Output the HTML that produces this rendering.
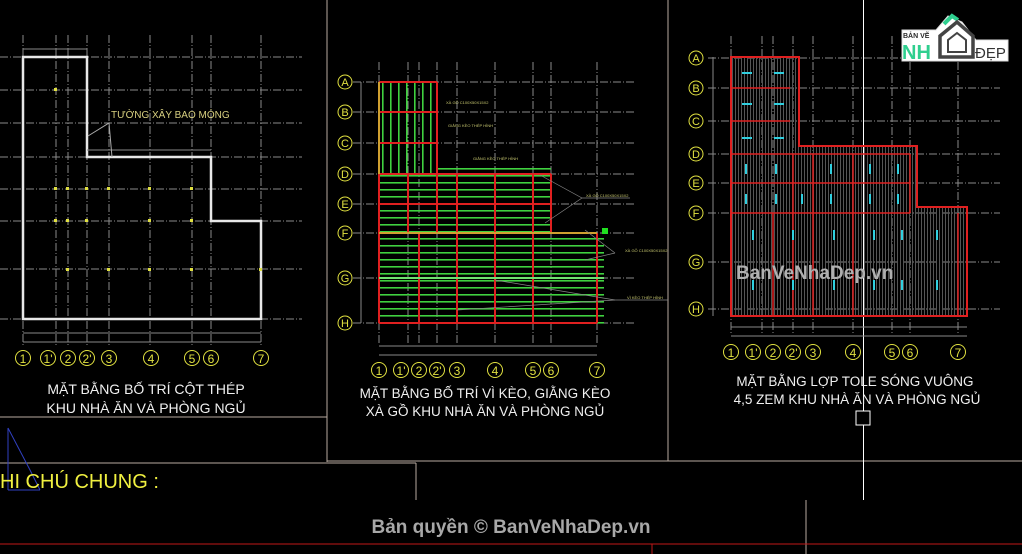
<!DOCTYPE html>
<html><head><meta charset="utf-8"><style>
html,body{margin:0;padding:0;background:#000;width:1022px;height:554px;overflow:hidden}
svg{display:block}
text{font-family:"Liberation Sans",sans-serif}
</style></head><body>
<svg width="1022" height="554" viewBox="0 0 1022 554" xmlns="http://www.w3.org/2000/svg">
<defs>
<pattern id="hg" width="10" height="7" patternUnits="userSpaceOnUse" y="168"><rect y="0" width="10" height="1.6" fill="#3fd23f"/></pattern>
<pattern id="vg" width="8" height="10" patternUnits="userSpaceOnUse" x="382"><rect width="1.6" height="10" fill="#3fd23f"/></pattern>
<pattern id="vh" width="3" height="10" patternUnits="userSpaceOnUse"><rect width="1" height="10" fill="#555"/></pattern>
</defs>
<rect width="1022" height="554" fill="#000"/>

<g stroke="#b8aaa0" stroke-width="1" fill="none">
<line x1="0" y1="417" x2="327" y2="417"/>
<line x1="327" y1="0" x2="327" y2="462"/>
<line x1="668" y1="0" x2="668" y2="461"/>
<line x1="327" y1="461" x2="1022" y2="461"/>
<line x1="0" y1="463" x2="416" y2="463"/>
<line x1="416" y1="463" x2="416" y2="500"/>
<line x1="806" y1="500" x2="806" y2="554"/>
</g>
<line x1="0" y1="544" x2="1022" y2="544" stroke="#c01818"/>
<line x1="652" y1="544" x2="652" y2="554" stroke="#c01818"/>
<line x1="863.5" y1="0" x2="863.5" y2="500" stroke="#fff"/>
<rect x="856" y="411" width="14" height="14" fill="#000" stroke="#fff"/>
<path d="M8 428 L8 490 M8 428 L30 470 L40 490 M8 490 L40 490" stroke="#3040c0" fill="none"/>

<!-- PANEL 1 -->
<g stroke="#8a8a8a" stroke-width="1" stroke-dasharray="8 2 1 2">
<line x1="23" y1="35" x2="23" y2="345"/><line x1="56" y1="35" x2="56" y2="345"/><line x1="68" y1="35" x2="68" y2="345"/><line x1="87" y1="35" x2="87" y2="345"/><line x1="109" y1="35" x2="109" y2="345"/><line x1="150" y1="35" x2="150" y2="345"/><line x1="192" y1="35" x2="192" y2="345"/><line x1="211" y1="35" x2="211" y2="345"/><line x1="261" y1="35" x2="261" y2="345"/>
<line x1="0" y1="57" x2="302" y2="57"/><line x1="0" y1="90" x2="302" y2="90"/><line x1="0" y1="123" x2="302" y2="123"/><line x1="0" y1="157" x2="302" y2="157"/><line x1="0" y1="189" x2="302" y2="189"/><line x1="0" y1="221" x2="302" y2="221"/><line x1="0" y1="269" x2="302" y2="269"/><line x1="0" y1="319" x2="302" y2="319"/>
</g>
<polygon points="23,57 87,57 87,157 211,157 211,221 261,221 261,319 23,319" fill="none" stroke="#e8e8e8" stroke-width="2.5"/>
<g fill="#e0e040">
<rect x="54" y="88" width="3" height="3"/><rect x="54" y="187" width="3" height="3"/><rect x="66" y="187" width="3" height="3"/><rect x="85" y="187" width="3" height="3"/><rect x="107" y="187" width="3" height="3"/><rect x="148" y="187" width="3" height="3"/><rect x="190" y="187" width="3" height="3"/><rect x="54" y="219" width="3" height="3"/><rect x="66" y="219" width="3" height="3"/><rect x="85" y="219" width="3" height="3"/><rect x="148" y="219" width="3" height="3"/><rect x="190" y="219" width="3" height="3"/><rect x="66" y="268" width="3" height="3"/><rect x="107" y="268" width="3" height="3"/><rect x="148" y="268" width="3" height="3"/><rect x="190" y="268" width="3" height="3"/><rect x="259" y="268" width="3" height="3"/>
</g>
<g stroke="#888"><line x1="23" y1="333" x2="261" y2="333"/><line x1="23" y1="342" x2="261" y2="342"/><line x1="23" y1="49" x2="87" y2="49"/><line x1="87" y1="150" x2="211" y2="150"/></g>
<text x="111" y="118" font-size="10" fill="#d8d080">TƯỜNG XÂY BAO MÓNG</text>
<path d="M88 136 L109 123 L112 157" stroke="#aaa" fill="none"/>
<g fill="none" stroke="#e0e040" stroke-width="1"><circle cx="23" cy="358" r="7.5"/><circle cx="48" cy="358" r="7.5"/><circle cx="68" cy="358" r="7.5"/><circle cx="87" cy="358" r="7.5"/><circle cx="109" cy="358" r="7.5"/><circle cx="151" cy="358" r="7.5"/><circle cx="192" cy="358" r="7.5"/><circle cx="211" cy="358" r="7.5"/><circle cx="261" cy="358" r="7.5"/></g>
<g fill="#e0e040" font-size="12" text-anchor="middle"><text x="23" y="363">1</text><text x="48" y="363">1'</text><text x="68" y="363">2</text><text x="87" y="363">2'</text><text x="109" y="363">3</text><text x="151" y="363">4</text><text x="192" y="363">5</text><text x="211" y="363">6</text><text x="261" y="363">7</text></g>
<g fill="#f0f0f0" font-size="14" text-anchor="middle"><text x="146" y="394">MẶT BẰNG BỐ TRÍ CỘT THÉP</text><text x="146" y="413">KHU NHÀ ĂN VÀ PHÒNG NGỦ</text></g>

<!-- PANEL 2 -->
<g stroke="#8a8a8a" stroke-dasharray="8 2 1 2">
<line x1="379" y1="62" x2="379" y2="345"/><line x1="408" y1="62" x2="408" y2="345"/><line x1="419" y1="62" x2="419" y2="345"/><line x1="437" y1="62" x2="437" y2="345"/><line x1="457" y1="62" x2="457" y2="345"/><line x1="495" y1="62" x2="495" y2="345"/><line x1="533" y1="62" x2="533" y2="345"/><line x1="551" y1="62" x2="551" y2="345"/><line x1="597" y1="62" x2="597" y2="345"/>
<line x1="353" y1="82" x2="635" y2="82"/><line x1="353" y1="112" x2="635" y2="112"/><line x1="353" y1="143" x2="635" y2="143"/><line x1="353" y1="174" x2="635" y2="174"/><line x1="353" y1="204" x2="635" y2="204"/><line x1="353" y1="233" x2="635" y2="233"/><line x1="353" y1="278" x2="635" y2="278"/><line x1="353" y1="323" x2="635" y2="323"/>
</g>
<rect x="379" y="82" width="58" height="92" fill="url(#vg)"/>
<rect x="437" y="165" width="114" height="68" fill="url(#hg)"/>
<rect x="379" y="175" width="58" height="58" fill="url(#hg)"/>
<rect x="379" y="233" width="225" height="95" fill="url(#hg)"/>
<g stroke="#e02020" stroke-width="2" fill="none">
<line x1="379" y1="82" x2="437" y2="82"/><line x1="379" y1="112" x2="437" y2="112"/><line x1="379" y1="143" x2="437" y2="143"/><line x1="379" y1="174" x2="551" y2="174"/><line x1="379" y1="204" x2="551" y2="204"/><line x1="379" y1="323" x2="597" y2="323"/>
<line x1="379" y1="174" x2="379" y2="323"/><line x1="408" y1="174" x2="408" y2="233"/><line x1="419" y1="233" x2="419" y2="323"/><line x1="437" y1="82" x2="437" y2="233"/><line x1="457" y1="174" x2="457" y2="323"/><line x1="495" y1="174" x2="495" y2="323"/><line x1="533" y1="174" x2="533" y2="323"/><line x1="551" y1="174" x2="551" y2="233"/><line x1="597" y1="233" x2="597" y2="323"/>
</g>
<line x1="379" y1="82" x2="379" y2="174" stroke="#d0a030" stroke-width="2"/>
<line x1="379" y1="233" x2="597" y2="233" stroke="#d0a030" stroke-width="2"/>
<line x1="379" y1="278" x2="604" y2="278" stroke="#6fe06f" stroke-width="2"/>
<rect x="602" y="228" width="6" height="6" fill="#20e020"/>
<g stroke="#888" stroke-width="0.7"><line x1="540" y1="175" x2="582" y2="198"/><line x1="545" y1="223" x2="582" y2="198"/><line x1="582" y1="198" x2="630" y2="198"/><line x1="585" y1="230" x2="615" y2="253"/><line x1="585" y1="260" x2="615" y2="253"/><line x1="495" y1="280" x2="615" y2="300"/><line x1="457" y1="310" x2="615" y2="300"/><line x1="615" y1="300" x2="668" y2="300"/></g>
<g fill="#c8c870" font-size="4"><text x="446" y="104">XÀ GỖ C100X50X15X2</text><text x="448" y="127">GIẰNG KÈO THÉP HÌNH</text><text x="473" y="160">GIẰNG KÈO THÉP HÌNH</text><text x="586" y="197">XÀ GỖ C100X50X15X2</text><text x="625" y="252">XÀ GỖ C100X50X15X2</text><text x="627" y="299">VÌ KÈO THÉP HÌNH</text></g>
<g fill="none" stroke="#e0e040"><circle cx="345" cy="82" r="7"/><circle cx="345" cy="112" r="7"/><circle cx="345" cy="143" r="7"/><circle cx="345" cy="174" r="7"/><circle cx="345" cy="204" r="7"/><circle cx="345" cy="233" r="7"/><circle cx="345" cy="278" r="7"/><circle cx="345" cy="323" r="7"/>
<circle cx="379" cy="370" r="7.5"/><circle cx="401" cy="370" r="7.5"/><circle cx="419" cy="370" r="7.5"/><circle cx="437" cy="370" r="7.5"/><circle cx="457" cy="370" r="7.5"/><circle cx="495" cy="370" r="7.5"/><circle cx="533" cy="370" r="7.5"/><circle cx="551" cy="370" r="7.5"/><circle cx="597" cy="370" r="7.5"/></g>
<g fill="#e0e040" font-size="11" text-anchor="middle"><text x="345" y="86">A</text><text x="345" y="116">B</text><text x="345" y="147">C</text><text x="345" y="178">D</text><text x="345" y="208">E</text><text x="345" y="237">F</text><text x="345" y="282">G</text><text x="345" y="327">H</text>
<text x="379" y="375" font-size="12">1</text><text x="401" y="375" font-size="12">1'</text><text x="419" y="375" font-size="12">2</text><text x="437" y="375" font-size="12">2'</text><text x="457" y="375" font-size="12">3</text><text x="495" y="375" font-size="12">4</text><text x="533" y="375" font-size="12">5</text><text x="551" y="375" font-size="12">6</text><text x="597" y="375" font-size="12">7</text></g>
<g stroke="#888"><line x1="379" y1="346" x2="597" y2="346"/><line x1="379" y1="355" x2="597" y2="355"/><line x1="361" y1="82" x2="361" y2="323"/></g>
<g fill="#f0f0f0" font-size="13.5" text-anchor="middle"><text x="485" y="398">MẶT BẰNG BỐ TRÍ VÌ KÈO, GIẰNG KÈO</text><text x="485" y="416">XÀ GỒ KHU NHÀ ĂN VÀ PHÒNG NGỦ</text></g>

<!-- PANEL 3 -->
<g stroke="#8a8a8a" stroke-dasharray="8 2 1 2">
<line x1="731" y1="36" x2="731" y2="335"/><line x1="762" y1="36" x2="762" y2="335"/><line x1="773" y1="36" x2="773" y2="335"/><line x1="793" y1="36" x2="793" y2="335"/><line x1="813" y1="36" x2="813" y2="335"/><line x1="853" y1="36" x2="853" y2="335"/><line x1="892" y1="36" x2="892" y2="335"/><line x1="910" y1="36" x2="910" y2="335"/><line x1="958" y1="36" x2="958" y2="335"/>
<line x1="708" y1="58" x2="1000" y2="58"/><line x1="708" y1="88" x2="1000" y2="88"/><line x1="708" y1="121" x2="1000" y2="121"/><line x1="708" y1="154" x2="1000" y2="154"/><line x1="708" y1="183" x2="1000" y2="183"/><line x1="708" y1="213" x2="1000" y2="213"/><line x1="708" y1="262" x2="1000" y2="262"/><line x1="708" y1="309" x2="1000" y2="309"/>
</g>
<polygon points="731,57 799,57 799,146 917,146 917,207 967,207 967,316 731,316" fill="url(#vh)" stroke="#e02020" stroke-width="2"/>
<g stroke="#e02020" stroke-width="1.5"><line x1="731" y1="88" x2="790" y2="88"/><line x1="731" y1="121" x2="790" y2="121"/><line x1="731" y1="154" x2="910" y2="154"/><line x1="731" y1="183" x2="910" y2="183"/><line x1="731" y1="213" x2="910" y2="213"/><line x1="793" y1="154" x2="793" y2="316"/><line x1="773" y1="213" x2="773" y2="316"/><line x1="813" y1="154" x2="813" y2="316"/><line x1="853" y1="154" x2="853" y2="316"/><line x1="910" y1="154" x2="910" y2="213"/><line x1="958" y1="213" x2="958" y2="316"/></g>
<g stroke="#30d0e0" stroke-width="2"><line x1="742" y1="73" x2="752" y2="73"/><line x1="774" y1="73" x2="784" y2="73"/><line x1="742" y1="104" x2="752" y2="104"/><line x1="774" y1="104" x2="784" y2="104"/><line x1="742" y1="138" x2="752" y2="138"/><line x1="774" y1="138" x2="784" y2="138"/>
<line x1="746" y1="164" x2="746" y2="174"/><line x1="776" y1="164" x2="776" y2="174"/><line x1="831" y1="164" x2="831" y2="174"/><line x1="870" y1="164" x2="870" y2="174"/><line x1="898" y1="164" x2="898" y2="174"/>
<line x1="746" y1="194" x2="746" y2="204"/><line x1="776" y1="194" x2="776" y2="204"/><line x1="802" y1="194" x2="802" y2="204"/><line x1="831" y1="194" x2="831" y2="204"/><line x1="870" y1="194" x2="870" y2="204"/><line x1="898" y1="194" x2="898" y2="204"/>
<line x1="753" y1="230" x2="753" y2="240"/><line x1="793" y1="230" x2="793" y2="240"/><line x1="834" y1="230" x2="834" y2="240"/><line x1="874" y1="230" x2="874" y2="240"/><line x1="902" y1="230" x2="902" y2="240"/><line x1="937" y1="230" x2="937" y2="240"/>
<line x1="753" y1="280" x2="753" y2="290"/><line x1="793" y1="280" x2="793" y2="290"/><line x1="834" y1="280" x2="834" y2="290"/><line x1="874" y1="280" x2="874" y2="290"/><line x1="902" y1="280" x2="902" y2="290"/><line x1="937" y1="280" x2="937" y2="290"/></g>
<g fill="none" stroke="#e0e040"><circle cx="696" cy="58" r="7"/><circle cx="696" cy="88" r="7"/><circle cx="696" cy="121" r="7"/><circle cx="696" cy="154" r="7"/><circle cx="696" cy="183" r="7"/><circle cx="696" cy="213" r="7"/><circle cx="696" cy="262" r="7"/><circle cx="696" cy="309" r="7"/>
<circle cx="731" cy="352" r="7.5"/><circle cx="753" cy="352" r="7.5"/><circle cx="773" cy="352" r="7.5"/><circle cx="793" cy="352" r="7.5"/><circle cx="813" cy="352" r="7.5"/><circle cx="853" cy="352" r="7.5"/><circle cx="892" cy="352" r="7.5"/><circle cx="910" cy="352" r="7.5"/><circle cx="958" cy="352" r="7.5"/></g>
<g fill="#e0e040" font-size="11" text-anchor="middle"><text x="696" y="62">A</text><text x="696" y="92">B</text><text x="696" y="125">C</text><text x="696" y="158">D</text><text x="696" y="187">E</text><text x="696" y="217">F</text><text x="696" y="266">G</text><text x="696" y="313">H</text>
<text x="731" y="357" font-size="12">1</text><text x="753" y="357" font-size="12">1'</text><text x="773" y="357" font-size="12">2</text><text x="793" y="357" font-size="12">2'</text><text x="813" y="357" font-size="12">3</text><text x="853" y="357" font-size="12">4</text><text x="892" y="357" font-size="12">5</text><text x="910" y="357" font-size="12">6</text><text x="958" y="357" font-size="12">7</text></g>
<g stroke="#888"><line x1="731" y1="327" x2="967" y2="327"/><line x1="731" y1="336" x2="967" y2="336"/><line x1="713" y1="57" x2="713" y2="316"/></g>
<text x="736" y="279" font-size="19" font-weight="bold" fill="#b0b0b0">BanVeNhaDep.vn</text>
<g fill="#f0f0f0" font-size="13.5" text-anchor="middle"><text x="855" y="386">MẶT BẰNG LỢP TOLE SÓNG VUÔNG</text><text x="857" y="404">4,5 ZEM KHU NHÀ ĂN VÀ PHÒNG NGỦ</text></g>

<!-- logo -->
<path d="M902 30 L936 30 L948 16 L962 22 L976 40 L1008 40 L1008 61 L902 61 Z" fill="#fff" stroke="#ddd"/>
<path d="M944 24 L952 16 L958 20" stroke="#2fcf8f" stroke-width="4" fill="none"/>
<path d="M940 57 L940 36 L957 22 L973 36 L973 57 Z" fill="none" stroke="#444" stroke-width="3.5"/>
<path d="M948 52 L948 40 L957 33 L966 40 L966 52 Z" fill="#fff" stroke="#444" stroke-width="2"/>
<text x="903" y="38" font-size="7" font-weight="bold" fill="#2a2a2a">BẢN VẼ</text>
<text x="902" y="59" font-size="20" font-weight="bold" fill="#2fcf8f">NH</text>
<text x="975" y="58" font-size="15" fill="#333">ĐẸP</text>

<!-- bottom -->
<text x="0" y="488" font-size="20" fill="#f0f040">HI CHÚ CHUNG :</text>
<text x="511" y="533" font-size="19" font-weight="bold" fill="#a8a8a8" text-anchor="middle">Bản quyền © BanVeNhaDep.vn</text>
</svg>
</body></html>
